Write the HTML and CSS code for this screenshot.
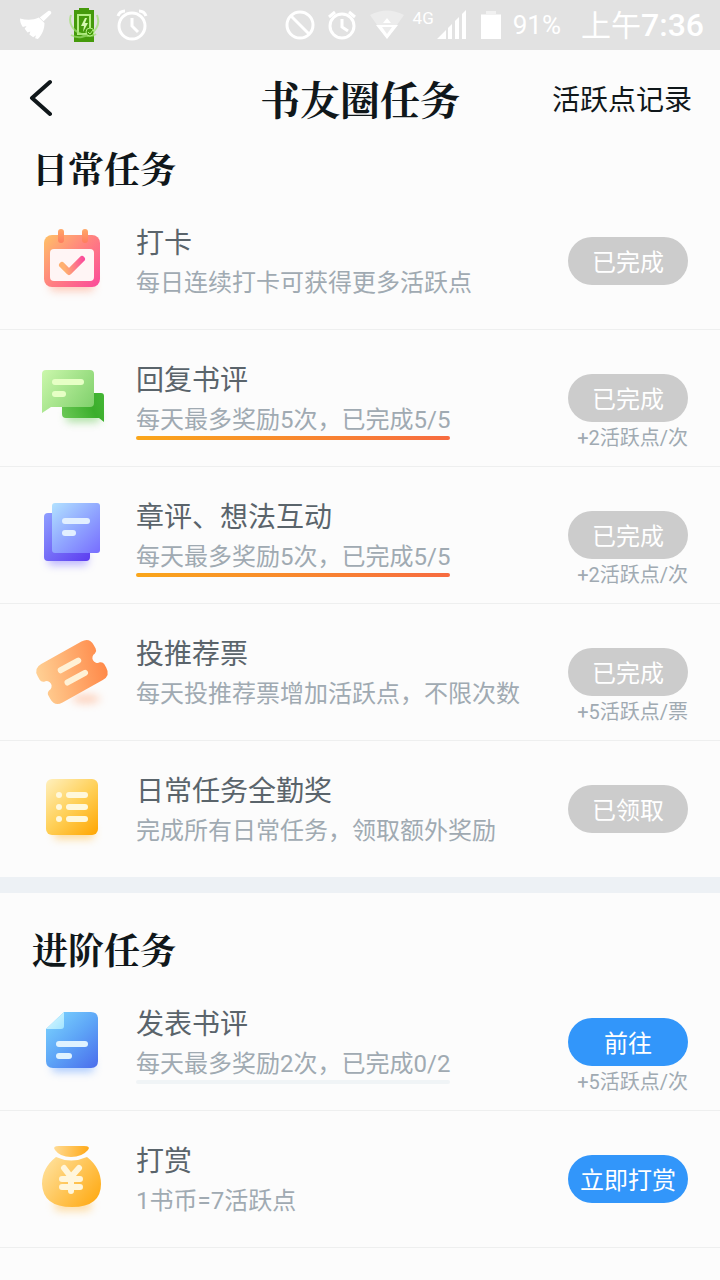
FILE: index.html
```html
<!DOCTYPE html>
<html lang="zh-CN">
<head>
    <meta charset="UTF-8">
    <meta name="viewport" content="width=device-width, initial-scale=1.0">
    <title>书友圈任务</title>
    <link rel="stylesheet" href="styles.css">
</head>
<body>
    <div class="status-bar">
        <div class="status-left">
            <svg width="32" height="32" viewBox="0 0 34 32" fill="#fff">
                <path d="M30 1c2-1 4 1 3 3l-8 8-4-4z"/>
                <path d="M20 8l6 6c0 6-2 12-7 17l-3-1 1-3-3 2-4-3 1-3-3 1-3-4 2-3-4 1C1 15 0 13 0 9c7 2 14 2 20-1z"/>
            </svg>
            <svg width="32" height="36" viewBox="0 0 32 36" fill="none">
                <path d="M6 3h5V1h10v2h5v32H6z" fill="#459a0b"/>
                <path d="M10 8h12v19H10z" stroke="#b4ee84" stroke-width="2"/>
                <path d="M17 11l-4 8h3l-1 6 5-9h-3l2-5z" fill="#d5f8b0"/>
                <path d="M3 8c-3 8 2 15 8 18s13 4 17 1M29 8c3 8 0 14-5 18S9 32 3 28" stroke="#a0e070" stroke-width="2" opacity=".7"/>
                <circle cx="22" cy="25" r="4" fill="#459a0b" stroke="#b4ee84"/>
                <path d="M20 25l2 2 3-4" stroke="#b4ee84"/>
            </svg>
            <svg width="32" height="32" viewBox="0 0 32 32" fill="none" stroke="#fff" stroke-width="3">
                <circle cx="16" cy="17" r="13"/>
                <path d="M16 9v8l6 6M2 7c1-3 4-5 7-5M30 7c-1-3-4-5-7-5"/>
            </svg>
        </div>
        <div class="status-right">
            <svg width="30" height="30" viewBox="0 0 30 30" fill="none" stroke="#fff" stroke-width="3">
                <circle cx="15" cy="15" r="13"/>
                <path d="M6 6l18 18"/>
            </svg>
            <svg width="30" height="30" viewBox="0 0 30 30" fill="none" stroke="#fff" stroke-width="3">
                <circle cx="15" cy="16" r="12"/>
                <path d="M15 9v8l6 4M2 7l6-5M28 7l-6-5"/>
            </svg>
            <svg width="36" height="30" viewBox="0 0 36 30" fill="#fff">
                <path d="M1 5q17-9 34 0L18 29z" opacity=".35"/>
                <path d="M18 8l-4 5h8zM7 15h22L18 29zM13 17l5 7 5-7z" fill-rule="evenodd"/>
            </svg>
            <span class="network">4G</span>
            <svg width="30" height="30" viewBox="0 0 30 30" fill="#fff">
                <path d="M0 29l9-9v9zM11 18l4-4v15h-4zM18 11l4-4v22h-4zM25 4l4-4v29h-4z"/>
            </svg>
            <svg class="battery" width="20" height="30" viewBox="0 0 20 30" fill="#fff">
                <path d="M0 4h5V1h10v3h5v2H0z" opacity=".5"/>
                <path d="M0 5h20v24H0z"/>
            </svg>
            <span class="percent">91%</span>
            <span class="clock">上午<b>7:36</b></span>
        </div>
    </div>

    <header class="header">
        <button class="back" type="button" aria-label="返回">
            <svg width="24" height="38" viewBox="0 0 24 38" fill="none" stroke="#10171a" stroke-width="4" stroke-linecap="round" stroke-linejoin="round">
                <path d="M22 3L4 19l18 16"/>
            </svg>
        </button>
        <h1>书友圈任务</h1>
        <a class="record" href="#">活跃点记录</a>
    </header>

    <section class="section">
        <h2>日常任务</h2>
        <ul class="task-list">
            <li class="task">
                <svg class="icon" viewBox="0 0 80 80" fill="none">
                    <defs>
                        <linearGradient id="pink" x1="12" y1="14" x2="68" y2="66" gradientUnits="userSpaceOnUse">
                            <stop stop-color="#ffc267"/><stop offset=".5" stop-color="#ff8080"/><stop offset="1" stop-color="#fb4a9b"/>
                        </linearGradient>
                        <linearGradient id="ring" x1="0" y1="8" x2="0" y2="22" gradientUnits="userSpaceOnUse">
                            <stop stop-color="#ffa868"/><stop offset="1" stop-color="#ff7c5e"/>
                        </linearGradient>
                        <linearGradient id="check" x1="32" y1="44" x2="52" y2="40" gradientUnits="userSpaceOnUse">
                            <stop stop-color="#ffb070"/><stop offset="1" stop-color="#fb4a9b"/>
                        </linearGradient>
                    </defs>
                    <rect class="glow" x="18" y="56" width="44" height="14" rx="4" fill="#ff9a78"/>
                    <rect x="12" y="14" width="56" height="52" rx="8" fill="url(#pink)"/>
                    <rect x="18" y="28" width="44" height="32" rx="4" fill="#fff5f5"/>
                    <rect x="26" y="8" width="6" height="14" rx="3" fill="url(#ring)"/>
                    <rect x="50" y="8" width="6" height="14" rx="3" fill="url(#ring)"/>
                    <path d="M30 44l7 7 13-13" stroke="url(#check)" stroke-width="6" stroke-linecap="round" stroke-linejoin="round"/>
                </svg>
                <div class="info">
                    <h3>打卡</h3>
                    <p class="desc">每日连续打卡可获得更多活跃点</p>
                </div>
                <div class="action">
                    <button class="btn btn-done" type="button">已完成</button>
                </div>
            </li>
            <li class="task">
                <svg class="icon" viewBox="0 0 80 80" fill="none">
                    <defs>
                        <linearGradient id="green" x1="10" y1="12" x2="62" y2="50" gradientUnits="userSpaceOnUse">
                            <stop stop-color="#cbf7ac"/><stop offset="1" stop-color="#7fd06b"/>
                        </linearGradient>
                        <linearGradient id="green-dark" x1="30" y1="60" x2="72" y2="42" gradientUnits="userSpaceOnUse">
                            <stop stop-color="#6cc957"/><stop offset=".7" stop-color="#3bae2b"/><stop offset="1" stop-color="#43b534"/>
                        </linearGradient>
                    </defs>
                    <rect class="glow" x="34" y="54" width="34" height="10" rx="4" fill="#5cc548"/>
                    <path d="M33 35h36q3 0 3 3v26l-5-4H34q-4 0-4-4V38q0-3 3-3z" fill="url(#green-dark)"/>
                    <path d="M14 12h44q4 0 4 4v29q0 4-4 4H19l-9 6V16q0-4 4-4z" fill="url(#green)"/>
                    <rect x="20" y="21" width="32" height="6" rx="3" fill="#e6ffc5"/>
                    <rect x="20" y="33" width="14" height="6" rx="3" fill="#e6ffc5"/>
                </svg>
                <div class="info">
                    <h3>回复书评</h3>
                    <p class="desc desc-progress full">每天最多奖励5次，已完成5/5</p>
                </div>
                <div class="action">
                    <button class="btn btn-done" type="button">已完成</button>
                    <span class="reward">+2活跃点/次</span>
                </div>
            </li>
            <li class="task">
                <svg class="icon" viewBox="0 0 80 80" fill="none">
                    <defs>
                        <linearGradient id="violet" x1="20" y1="8" x2="68" y2="58" gradientUnits="userSpaceOnUse">
                            <stop stop-color="#b2e2ff"/><stop offset=".5" stop-color="#91a7ff"/><stop offset="1" stop-color="#776dff"/>
                        </linearGradient>
                        <linearGradient id="violet-dark" x1="12" y1="18" x2="58" y2="66" gradientUnits="userSpaceOnUse">
                            <stop stop-color="#8f9fff"/><stop offset="1" stop-color="#5c3cf0"/>
                        </linearGradient>
                    </defs>
                    <rect class="glow" x="16" y="58" width="40" height="12" rx="4" fill="#7b6dff"/>
                    <rect x="12" y="18" width="46" height="48" rx="4" fill="url(#violet-dark)"/>
                    <rect x="20" y="8" width="48" height="50" rx="3" fill="url(#violet)"/>
                    <rect x="30" y="23" width="28" height="6" rx="3" fill="#e2efff"/>
                    <rect x="30" y="35" width="14" height="6" rx="3" fill="#e2efff"/>
                </svg>
                <div class="info">
                    <h3>章评、想法互动</h3>
                    <p class="desc desc-progress full">每天最多奖励5次，已完成5/5</p>
                </div>
                <div class="action">
                    <button class="btn btn-done" type="button">已完成</button>
                    <span class="reward">+2活跃点/次</span>
                </div>
            </li>
            <li class="task">
                <svg class="icon" viewBox="0 0 80 80" fill="none">
                    <defs>
                        <linearGradient id="orange" x1="-32" y1="-10" x2="32" y2="10" gradientUnits="userSpaceOnUse">
                            <stop stop-color="#ffcf93"/><stop offset="1" stop-color="#ff8a4a"/>
                        </linearGradient>
                    </defs>
                    <ellipse class="glow" cx="54" cy="67" rx="14" ry="4" fill="#ff9c6c"/>
                    <g transform="translate(40 40) rotate(-29)">
                        <path d="M-23-22h46q9 0 9 9v4q0 3-3 4a5 5 0 0 0 0 10q3 1 3 4v4q0 9-9 9h-46q-9 0-9-9v-4q0-3 3-4a5 5 0 0 0 0-10q-3-1-3-4v-4q0-9 9-9z" fill="url(#orange)"/>
                        <path d="M-9-7h20M-9 7h20" stroke="#fff1d6" stroke-width="6" stroke-linecap="round"/>
                    </g>
                </svg>
                <div class="info">
                    <h3>投推荐票</h3>
                    <p class="desc">每天投推荐票增加活跃点，不限次数</p>
                </div>
                <div class="action">
                    <button class="btn btn-done" type="button">已完成</button>
                    <span class="reward">+5活跃点/票</span>
                </div>
            </li>
            <li class="task">
                <svg class="icon" viewBox="0 0 80 80" fill="none">
                    <defs>
                        <linearGradient id="yellow" x1="14" y1="10" x2="66" y2="66" gradientUnits="userSpaceOnUse">
                            <stop stop-color="#fff0be"/><stop offset=".5" stop-color="#ffd058"/><stop offset="1" stop-color="#ffa500"/>
                        </linearGradient>
                    </defs>
                    <rect class="glow" x="22" y="58" width="40" height="12" rx="4" fill="#ffb937"/>
                    <rect x="14" y="10" width="52" height="56" rx="6" fill="url(#yellow)"/>
                    <g fill="#fff8dc">
                        <circle cx="27" cy="26" r="3"/><rect x="34" y="23" width="22" height="6" rx="3"/>
                        <circle cx="27" cy="38" r="3"/><rect x="34" y="35" width="22" height="6" rx="3"/>
                        <circle cx="27" cy="50" r="3"/><rect x="34" y="47" width="22" height="6" rx="3"/>
                    </g>
                </svg>
                <div class="info">
                    <h3>日常任务全勤奖</h3>
                    <p class="desc">完成所有日常任务，领取额外奖励</p>
                </div>
                <div class="action">
                    <button class="btn btn-done" type="button">已领取</button>
                </div>
            </li>
        </ul>
    </section>

    <section class="section section-advanced">
        <h2>进阶任务</h2>
        <ul class="task-list">
            <li class="task">
                <svg class="icon" viewBox="0 0 80 80" fill="none">
                    <defs>
                        <linearGradient id="blue" x1="14" y1="10" x2="66" y2="66" gradientUnits="userSpaceOnUse">
                            <stop stop-color="#7ed8ff"/><stop offset=".5" stop-color="#5ea6f7"/><stop offset="1" stop-color="#4a6cec"/>
                        </linearGradient>
                        <linearGradient id="fold" x1="18" y1="14" x2="32" y2="27" gradientUnits="userSpaceOnUse">
                            <stop stop-color="#d4f6ff"/><stop offset="1" stop-color="#a2e4ff"/>
                        </linearGradient>
                    </defs>
                    <rect class="glow" x="20" y="58" width="42" height="12" rx="4" fill="#5e9bff"/>
                    <path d="M32 10h27q7 0 7 7v42q0 7-7 7H21q-7 0-7-7V27z" fill="url(#blue)"/>
                    <path d="M32 10v14q0 3-3 3H14z" fill="url(#fold)"/>
                    <rect x="24" y="39" width="32" height="6" rx="3" fill="#dff3ff"/>
                    <rect x="24" y="51" width="16" height="6" rx="3" fill="#dff3ff"/>
                </svg>
                <div class="info">
                    <h3>发表书评</h3>
                    <p class="desc desc-progress">每天最多奖励2次，已完成0/2</p>
                </div>
                <div class="action">
                    <button class="btn" type="button">前往</button>
                    <span class="reward">+5活跃点/次</span>
                </div>
            </li>
            <li class="task">
                <svg class="icon" viewBox="0 0 80 80" fill="none">
                    <defs>
                        <linearGradient id="gold" x1="14" y1="22" x2="64" y2="62" gradientUnits="userSpaceOnUse">
                            <stop stop-color="#ffe09a"/><stop offset="1" stop-color="#ffac18"/>
                        </linearGradient>
                        <linearGradient id="neck" x1="22" y1="10" x2="57" y2="14" gradientUnits="userSpaceOnUse">
                            <stop stop-color="#ffdb94"/><stop offset="1" stop-color="#ffa814"/>
                        </linearGradient>
                    </defs>
                    <rect class="glow" x="22" y="60" width="38" height="12" rx="6" fill="#ffbf50"/>
                    <path d="M24 18q15 7 31 0 14 11 14 27 0 23-29 23T10 45q0-16 14-27z" fill="url(#gold)"/>
                    <path d="M27 7h25q7 0 4 4-6 7-17 7T23 11q-3-4 4-4z" fill="url(#neck)"/>
                    <g stroke="#fff6dc" stroke-width="6" stroke-linecap="round">
                        <path d="M32 29l7 9 8-9M39 38v14"/>
                        <path d="M30 40h18M30 48h18"/>
                    </g>
                </svg>
                <div class="info">
                    <h3>打赏</h3>
                    <p class="desc">1书币=7活跃点</p>
                </div>
                <div class="action">
                    <button class="btn" type="button">立即打赏</button>
                </div>
            </li>
        </ul>
    </section>
</body>
</html>
```

FILE: styles.css
```css
* {
    margin: 0;
    padding: 0;
    box-sizing: border-box;
}

body {
    font-family: Roboto, "Noto Sans CJK SC", sans-serif;
    background: #fcfcfc;
    color: #10171a;
    min-height: 100vh;
}

svg {
    display: block;
    flex: none;
}

button {
    border: none;
    font-family: inherit;
    cursor: pointer;
}

/* 状态栏 */
.status-bar {
    display: flex;
    align-items: center;
    justify-content: space-between;
    height: 50px;
    padding: 0 16px 0 20px;
    background: #e2e2e2;
    color: #fff;
}

.status-left,
.status-right {
    display: flex;
    align-items: center;
}

.status-left {
    gap: 16px;
}

.status-right {
    gap: 12px;
}

.network {
    font-size: 17px;
    line-height: 20px;
    margin: 0 -9px 14px -4px;
}

.battery {
    margin-left: 2px;
}

.percent {
    font-size: 26px;
    margin-right: 8px;
}

.clock {
    font-size: 30px;
    line-height: 40px;
    white-space: nowrap;
}

.clock b {
    font-size: 32px;
    font-weight: 500;
}

/* 顶部导航 */
.header {
    display: grid;
    grid-template-columns: 1fr auto 1fr;
    align-items: center;
    height: 96px;
    padding: 0 28px;
}

.back {
    justify-self: start;
    background: none;
}

h1,
h2 {
    font-family: "Noto Serif CJK SC", "Noto Serif SC", "Source Han Serif SC", "Noto Sans CJK SC", serif;
    font-weight: 700;
}

h1 {
    font-size: 40px;
    line-height: 56px;
}

.record {
    justify-self: end;
    font-size: 28px;
    color: inherit;
    text-decoration: none;
}

/* 任务列表 */
.section h2 {
    padding: 0 32px 3px;
    font-size: 36px;
    line-height: 44px;
}

.section-advanced {
    border-top: 16px solid #edf1f5;
    padding-top: 34px;
}

.task-list {
    list-style: none;
}

.task {
    display: flex;
    align-items: flex-start;
    min-height: 137px;
    padding: 28px 32px 0;
    border-bottom: 1px solid #eeefef;
}

.section:not(.section-advanced) .task:last-child {
    min-height: 136px;
    border-bottom: none;
}

.icon {
    width: 80px;
    height: 80px;
    margin-right: 24px;
}

.glow {
    filter: blur(4px);
    opacity: 0.5;
}

.info {
    flex: 1;
    min-width: 0;
}

.info h3 {
    font-size: 28px;
    font-weight: 400;
    line-height: 46px;
    color: #5a646b;
}

.desc {
    font-size: 24px;
    line-height: 32px;
    color: #a0aab2;
}

.desc-progress {
    width: fit-content;
}

.desc-progress::after {
    content: "";
    display: block;
    height: 4px;
    border-radius: 2px;
    background: #f0f4f6;
}

.desc-progress.full::after {
    background: linear-gradient(90deg, #faa61a, #f76b40);
}

.action {
    display: flex;
    flex-direction: column;
    align-items: flex-end;
    padding-top: 16px;
}

.btn {
    width: 120px;
    height: 48px;
    padding-bottom: 2px;
    border-radius: 24px;
    background: #3296fa;
    color: #fff;
    font-size: 24px;
}

.btn-done {
    background: #ccc;
}

.reward {
    font-size: 20px;
    line-height: 32px;
    color: #a0aab2;
}
```
